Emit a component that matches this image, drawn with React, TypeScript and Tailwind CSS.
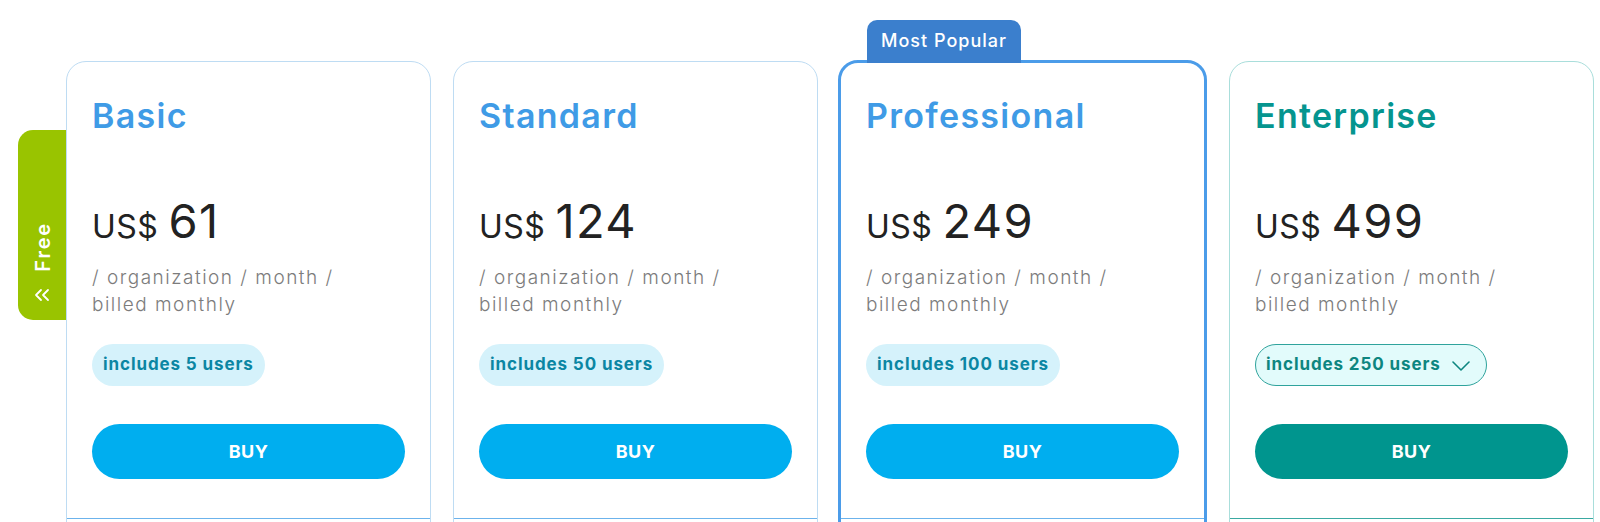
import React from "react";
import { ChevronsLeft } from "lucide-react";

type Plan = {
  name: string;
  price: string;
  users: string;
  variant: "blue" | "popular" | "teal";
};

const plans: Plan[] = [
  { name: "Basic", price: "61", users: "includes 5 users", variant: "blue" },
  { name: "Standard", price: "124", users: "includes 50 users", variant: "blue" },
  { name: "Professional", price: "249", users: "includes 100 users", variant: "popular" },
  { name: "Enterprise", price: "499", users: "includes 250 users", variant: "teal" },
];

function Card({ plan }: { plan: Plan }) {
  const teal = plan.variant === "teal";
  const popular = plan.variant === "popular";
  const cardCls = popular
    ? "relative z-10 w-[369px] -mx-[2px] -mt-[1px] h-[500px] shrink-0 rounded-[20px] border-[3px] border-[#4b9ce9] bg-white"
    : teal
    ? "relative z-10 ml-[2px] w-[365px] h-[500px] shrink-0 rounded-[20px] border border-[#a9dedb] bg-white"
    : "relative z-10 w-[365px] h-[500px] shrink-0 rounded-[20px] border border-[#bedcf3] bg-white";
  return (
    <div className={cardCls}>
      {popular && (
        <div className="absolute -top-[43px] left-[26px] flex h-[43px] w-[154px] items-start justify-center rounded-t-[10px] bg-[#3b7fcd] pt-[10px] text-[18px] font-medium leading-[22px] tracking-[1px] text-white">
          Most Popular
        </div>
      )}
      <div className={"flex flex-col px-[25px] " + (popular ? "pt-[33px]" : "pt-[34px]")}>
        <div
          className={
            "h-[40px] text-[34px] font-semibold leading-[40px] tracking-[1.3px] " +
            (teal ? "text-[#05958f]" : "text-[#3f9be6]")
          }
        >
          {plan.name}
        </div>
        <div className="mt-[62px] flex h-[45px] items-baseline leading-[45px] text-[#222222]">
          <span className="text-[32px] font-normal tracking-[0.5px]">US$</span>
          <span className="ml-[10px] text-[47px] font-normal tracking-[1.4px]">{plan.price}</span>
        </div>
        <div className="mt-[21px] text-[19px] font-light leading-[27px] tracking-[1.5px] text-[#7c7c7c]">
          <div>/ organization / month /</div>
          <div>billed monthly</div>
        </div>
        <div className="mt-[26px] flex">
          {teal ? (
            <div className="flex h-[42px] items-center gap-[11px] rounded-full border border-[#2fa39c] bg-[#e2fbfb] pl-[10px] pr-[16px] text-[17px] font-bold tracking-[0.9px] text-[#0d8680]">
              <span>{plan.users}</span>
              <svg width="18" height="10" viewBox="0 0 18 10" fill="none" className="mt-[2px]">
                <polyline
                  points="1,1 9,9 17,1"
                  stroke="#0d8680"
                  strokeWidth="1.6"
                  strokeLinecap="round"
                  strokeLinejoin="round"
                />
              </svg>
            </div>
          ) : (
            <div className="flex h-[42px] items-center rounded-full bg-[#d5f2fb] px-[11px] text-[17px] font-bold tracking-[0.9px] text-[#0b86a3]">
              {plan.users}
            </div>
          )}
        </div>
        <button
          className={
            "mt-[38px] flex h-[55px] w-full items-center justify-center rounded-full text-[18px] font-bold tracking-[0.5px] text-white " +
            (teal ? "bg-[#00958e]" : "bg-[#00aeef]")
          }
        >
          BUY
        </button>
      </div>
      <div
        className={
          "mt-[39px] border-t " + (teal ? "border-[#3aa9a2]" : "border-[#6cb3ec]")
        }
      />
    </div>
  );
}

export default function App() {
  return (
    <div
      className="relative h-[522px] w-[1600px] overflow-hidden bg-white"
      style={{ fontFamily: "Inter, 'Noto Sans', sans-serif" }}
    >
      <div className="absolute left-[18px] top-[130px] z-0 flex h-[190px] w-[50px] flex-col items-center justify-end rounded-l-[15px] bg-[#99c400] pb-[13px] text-white">
        <span className="rotate-180 text-[20px] font-semibold tracking-[1.8px] [writing-mode:vertical-rl]">
          Free
        </span>
        <ChevronsLeft size={24} strokeWidth={1.8} className="mr-[2px] mt-[11px]" />
      </div>
      <div className="flex gap-[22px] pl-[66px] pt-[61px]">
        {plans.map((p) => (
          <Card key={p.name} plan={p} />
        ))}
      </div>
    </div>
  );
}
